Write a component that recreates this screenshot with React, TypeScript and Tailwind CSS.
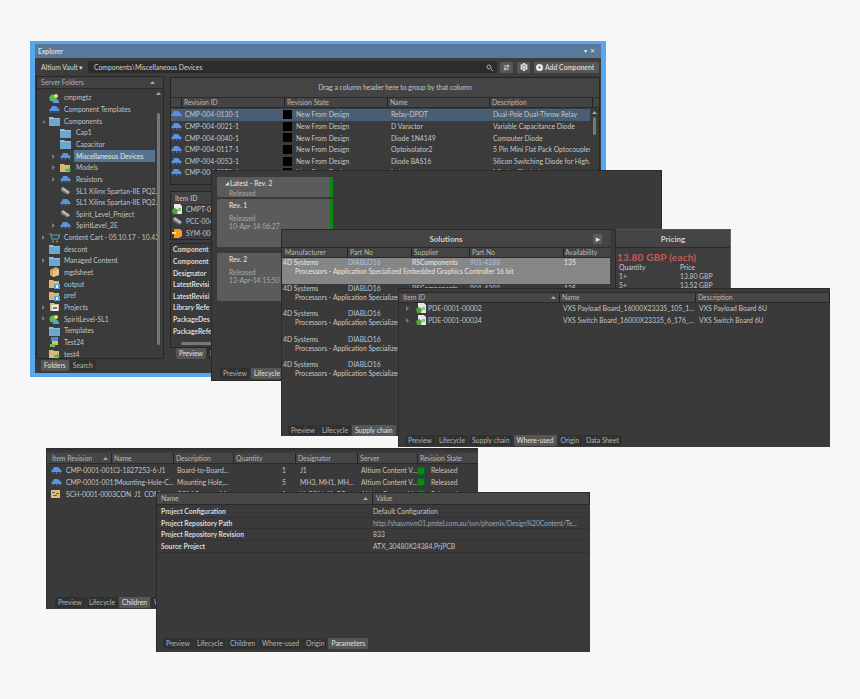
import type { ReactNode } from "react";
import { ArrowRightLeft, Settings } from "lucide-react";

type IconKind = "cloud" | "folder" | "tan" | "person" | "chip" | "cart" | "doc" | "sym" | "sch" | "cube" | "link" | "stack" | "green";

const Icon = ({ kind }: { kind: IconKind }) => {
  if (kind === "folder")
    return (
      <svg width="11" height="10" viewBox="0 0 11 10" className="shrink-0">
        <path d="M0 1h4l1 1h6v8H0z" fill="#8fc0df" />
        <path d="M0 3h11v7H0z" fill="#6ba7cf" />
      </svg>
    );
  if (kind === "tan")
    return (
      <svg width="11" height="10" viewBox="0 0 11 10" className="shrink-0">
        <path d="M0 1h4l1 1h5v7H0z" fill="#d8b873" />
        <path d="M5 5h6v5H5z" fill="#5aa0d8" />
        <path d="M7 6h2v3H7z" fill="#eee" />
      </svg>
    );
  if (kind === "green")
    return (
      <svg width="11" height="10" viewBox="0 0 11 10" className="shrink-0">
        <path d="M0 1h4l1 1h5v7H0z" fill="#d8b873" />
        <path d="M5 6h3V4l3 3-3 3V8H5z" fill="#4cb84c" />
      </svg>
    );
  if (kind === "cube")
    return (
      <svg width="11" height="10" viewBox="0 0 11 10" className="shrink-0">
        <path d="M1 3l6-3 3 2v6l-6 2-3-2z" fill="#c9a86b" />
        <path d="M4 4l6-2v6l-6 2z" fill="#e0c48c" />
      </svg>
    );
  if (kind === "person")
    return (
      <svg width="11" height="10" viewBox="0 0 11 10" className="shrink-0">
        <circle cx="4" cy="5" r="3.5" fill="#5cb85c" />
        <circle cx="7" cy="3" r="2" fill="#f0d860" />
        <path d="M4 10c0-3 1-4 3-4s3 1 3 4z" fill="#5aa0d8" />
      </svg>
    );
  if (kind === "chip")
    return (
      <svg width="11" height="10" viewBox="0 0 11 10" className="shrink-0">
        <path d="M1 3l2-2 7 5-2 2z" fill="#b5b5b5" />
        <path d="M1 3l7 5v1L1 5z" fill="#777" />
      </svg>
    );
  if (kind === "cart")
    return (
      <svg width="11" height="10" viewBox="0 0 11 10" className="shrink-0">
        <path d="M0 1h2l1 5h6l2-4H3" fill="none" stroke="#58a8a8" strokeWidth="1.2" />
        <circle cx="4" cy="8.5" r="1" fill="#c58a3a" />
        <circle cx="8" cy="8.5" r="1" fill="#c58a3a" />
      </svg>
    );
  if (kind === "doc")
    return (
      <svg width="11" height="11" viewBox="0 0 11 11" className="shrink-0">
        <path d="M2 0h6l2 2v8H2z" fill="#e8e8e8" />
        <path d="M0 6l3-2 3 2-1 4H1z" fill="#5aa03c" />
        <path d="M6 4h3v3H6z" fill="#8cc870" />
      </svg>
    );
  if (kind === "sym")
    return (
      <svg width="11" height="10" viewBox="0 0 11 10" className="shrink-0">
        <path d="M2 1h6l2 2v5l-3 2H2z" fill="#f0a020" />
        <path d="M0 4h4v2H0z" fill="#ffe080" />
      </svg>
    );
  if (kind === "sch")
    return (
      <svg width="9" height="8" viewBox="0 0 9 8" className="shrink-0">
        <path d="M0 0h9v8H0z" fill="#e0c070" />
        <path d="M1 2h3v1H1zM5 3h3v1H5zM2 5h4v1H2z" fill="#4a5f9a" />
      </svg>
    );
  if (kind === "link")
    return (
      <svg width="11" height="10" viewBox="0 0 11 10" className="shrink-0">
        <path d="M1 1h4l1 1h4v7H1z" fill="#d8c080" />
        <path d="M3 3h6v6H3z" fill="#e8eef8" />
        <path d="M4 5h4v2H4z" fill="#4c80c8" />
      </svg>
    );
  if (kind === "stack")
    return (
      <svg width="11" height="10" viewBox="0 0 11 10" className="shrink-0">
        <path d="M2 0h7v4H2z" fill="#4c88d8" />
        <path d="M3 4h6v4H3z" fill="#e0c050" />
        <path d="M1 7h5v3H1z" fill="#70b860" />
      </svg>
    );
  return (
    <svg width="11" height="9" viewBox="0 0 11 9" className="shrink-0">
      <path d="M0 5l2-2 1-2h4l2 2 2 2-1 1H1z" fill="#5b93dc" />
      <path d="M2 6v2M5.500 6v2M9 6v2" stroke="#3f6fb5" strokeWidth="1" />
    </svg>
  );
};

const Arrow = ({ open }: { open?: boolean }) => (
  <svg width="5" height="5" viewBox="0 0 5 5" className="shrink-0">
    <path d={open ? "M4 1v3H1z" : "M1 0l3 2.500-3 2.500z"} fill="#7c7c7c" />
  </svg>
);

const SortUp = () => (
  <svg width="5" height="3" viewBox="0 0 5 3" className="shrink-0">
    <path d="M0 3l2.500-3 2.500 3z" fill="#a8a8a8" />
  </svg>
);

const Tabs = ({ items, active, className }: { items: string[]; active: string; className: string }) => (
  <div className={`flex gap-[1px] ${className}`}>
    {items.map((t) => (
      <div
        key={t}
        className={`h-[11px] flex items-center px-[3px] rounded-b-[2px] ${
          t === active ? "bg-[#565656] text-[#e2e2e2]" : "bg-[#313131] text-[#b5b5b5]"
        }`}
      >
        {t}
      </div>
    ))}
  </div>
);

const Head = ({ children, className = "" }: { children: ReactNode; className?: string }) => (
  <div className={`flex items-center border-r border-[#222] pl-[2px] text-[#b9b9b9] overflow-hidden whitespace-nowrap ${className}`}>
    {children}
  </div>
);

const tree: { label: string; kind: IconKind; depth: number; arrow?: boolean; open?: boolean; sel?: boolean }[] = [
  { label: "cmpmgtz", kind: "person", depth: 1 },
  { label: "Component Templates", kind: "cloud", depth: 1 },
  { label: "Components", kind: "folder", depth: 1, arrow: true, open: true },
  { label: "Cap1", kind: "folder", depth: 2 },
  { label: "Capacitor", kind: "folder", depth: 2 },
  { label: "Miscellaneous Devices", kind: "cloud", depth: 2, arrow: true, sel: true },
  { label: "Models", kind: "green", depth: 2, arrow: true },
  { label: "Resistors", kind: "cloud", depth: 2, arrow: true },
  { label: "SL1 Xilinx Spartan-IIE PQ2...", kind: "chip", depth: 2 },
  { label: "SL1 Xilinx Spartan-IIE PQ2...", kind: "cloud", depth: 2 },
  { label: "Spirit_Level_Project", kind: "chip", depth: 2 },
  { label: "SpiritLevel_2E", kind: "cloud", depth: 2, arrow: true },
  { label: "Content Cart - 05.10.17 - 10.43", kind: "cart", depth: 1, arrow: true },
  { label: "descont", kind: "folder", depth: 1 },
  { label: "Managed Content", kind: "folder", depth: 1, arrow: true },
  { label: "mgdsheet", kind: "cube", depth: 1 },
  { label: "output", kind: "tan", depth: 1 },
  { label: "pref", kind: "tan", depth: 1 },
  { label: "Projects", kind: "link", depth: 1, arrow: true },
  { label: "SpiritLevel-SL1", kind: "person", depth: 1, arrow: true },
  { label: "Templates", kind: "folder", depth: 1 },
  { label: "Test24", kind: "stack", depth: 1 },
  { label: "test4", kind: "green", depth: 1 },
];

const revisions = [
  ["CMP-004-0130-1", "Relay-DPDT", "Dual-Pole Dual-Throw Relay"],
  ["CMP-004-0021-1", "D Varactor", "Variable Capacitance Diode"],
  ["CMP-004-0040-1", "Diode 1N4149", "Computer Diode"],
  ["CMP-004-0117-1", "Optoisolator2", "5 Pin Mini Flat Pack Optocoupler"],
  ["CMP-004-0053-1", "Diode BAS16", "Silicon Switching Diode for High..."],
  ["CMP-004-0071-1", "Inductor", "Missing Flat Inductor"],
];

const paramNames = ["Component", "Component", "Designator", "LatestRevisi", "LatestRevisi", "Library Refe", "PackageDes", "PackageRefe"];

const Explorer = () => (
  <div className="absolute left-[30px] top-[41px] w-[576px] h-[336px] bg-[#56a6f0] pt-[3px] px-[5px] pb-[4px]">
    <div className="flex flex-col h-full bg-[#3b3b3b]">
      <div className="h-[14px] bg-[#58799a] flex items-center justify-between pl-[3px] pr-[3px] text-[#e8e8e8] font-medium">
        <span>Explorer</span>
        <span className="text-[6px] tracking-[3px]">▾✕</span>
      </div>
      <div className="h-[18px] flex items-center pl-[6px] pr-[2px] bg-[#3d3d3d]">
        <span className="w-[47px] font-medium text-[#d0d0d0] whitespace-nowrap">Altium Vault ▾</span>
        <div className="w-[409px] h-[12px] bg-[#2c2c2c] rounded-[2px] flex items-center justify-between pl-[6px] pr-[4px] text-[#d4d4d4]">
          <span>Components\Miscellaneous Devices</span>
          <svg width="7" height="7" viewBox="0 0 7 7" fill="none" stroke="#aaa">
            <circle cx="3" cy="3" r="2" />
            <path d="M4.500 4.500L7 7" />
          </svg>
        </div>
        <div className="w-[13px] h-[11px] ml-[3px] bg-[#565656] rounded-[1px] flex items-center justify-center">
          <ArrowRightLeft size={7} color="#eee" strokeWidth={3} />
        </div>
        <div className="w-[13px] h-[11px] ml-[4px] bg-[#565656] rounded-[1px] flex items-center justify-center">
          <Settings size={8} color="#eee" strokeWidth={3.500} />
        </div>
        <div className="w-[65px] h-[11px] ml-[4px] bg-[#565656] rounded-[1px] flex items-center gap-[2px] pl-[2px] text-[#e4e4e4] font-medium whitespace-nowrap">
          <span className="w-[7px] h-[7px] rounded-full bg-[#eee] flex items-center justify-center text-[#444] text-[7px] leading-none shrink-0">+</span>
          Add Component
        </div>
      </div>
      <div className="flex flex-1 gap-[6px] pl-[1px] min-h-0">
        <div className="w-[128px] flex flex-col">
          <div className="h-[283px] border border-[#262626] flex flex-col">
            <div className="h-[12px] shrink-0 bg-[#424242] border-b border-[#2a2a2a] flex items-center justify-between pl-[4px] pr-[8px] text-[#b0b0b0]">
              <span>Server Folders</span>
              <SortUp />
            </div>
            <div className="flex flex-1 min-h-0">
              <div className="flex-1 pt-[3px] min-w-0">
                {tree.map((r, i) => (
                  <div key={i} className="h-[11.650px] flex items-center text-[#c2c2c2] whitespace-nowrap">
                    <span className={`flex items-center justify-end shrink-0 ${r.depth === 1 ? "w-[9px]" : "w-[19px]"}`}>
                      {r.arrow && <Arrow open={r.open} />}
                    </span>
                    <span className={`flex justify-center shrink-0 ${r.depth === 1 ? "w-[16px]" : "w-[18px]"}`}>
                      <Icon kind={r.kind} />
                    </span>
                    <span className={`h-full flex items-center px-[2px] ${r.sel ? "bg-[#56748f] text-[#e8e8e8] w-[84px]" : ""}`}>{r.label}</span>
                  </div>
                ))}
              </div>
              <div className="w-[8px] shrink-0 pt-[3px] pr-[2px] flex flex-col items-center">
                <SortUp />
                <div className="w-[3px] h-[232px] mt-[18px] bg-[#777] rounded-full" />
              </div>
            </div>
          </div>
          <Tabs items={["Folders", "Search"]} active="Folders" className="pl-[5px] pt-[1px]" />
        </div>

        <div className="w-[430px] flex flex-col pt-[1px] overflow-hidden">
          <div className="h-[108px] border border-[#262626] flex flex-col shrink-0">
            <div className="h-[19px] shrink-0 bg-[#444] flex items-center justify-center pl-[20px] text-[#c4c4c4]">
              Drag a column header here to group by that column
            </div>
            <div className="h-[11px] shrink-0 bg-[#444] border-y border-[#2a2a2a] grid grid-cols-[11px_103px_103px_102px_103px_1fr]">
              <Head> </Head>
              <Head>Revision ID</Head>
              <Head>Revision State</Head>
              <Head>Name</Head>
              <Head>Description</Head>
            </div>
            <div className="flex flex-1 min-h-0">
              <div className="flex-1 overflow-hidden pt-[1px]">
                {revisions.map((r, i) => (
                  <div
                    key={r[0]}
                    className={`h-[11.600px] grid grid-cols-[14px_98px_13px_95px_102px_1fr] items-center whitespace-nowrap text-[#c6c6c6] ${
                      i === 0 ? "bg-[#495e72]" : ""
                    }`}
                  >
                    <Icon kind="cloud" />
                    <span>{r[0]}</span>
                    <span className="w-[9px] h-[9px] bg-black" />
                    <span>New From Design</span>
                    <span>{r[1]}</span>
                    <span className="overflow-hidden">{r[2]}</span>
                  </div>
                ))}
              </div>
              <div className="w-[9px] shrink-0 pt-[3px] flex flex-col items-center">
                <SortUp />
                <div className="w-[3px] h-[18px] mt-[3px] bg-[#777] rounded-full" />
              </div>
            </div>
          </div>
          <div className="mt-[6px] h-[49px] border border-[#262626] flex flex-col shrink-0 pl-[1px]">
            <div className="h-[12px] flex items-center pl-[3px] font-medium text-[#bdbdbd] bg-[#424242]">Item ID</div>
            {[["doc", "CMPT-004-0130-1"], ["chip", "PCC-004-0130-1"], ["sym", "SYM-004-0130-1"]].map(([k, t]) => (
              <div key={t} className="h-[11.600px] flex items-center gap-[3px] text-[#c4c4c4]">
                <Icon kind={k as IconKind} />
                {t}
              </div>
            ))}
          </div>
          <div className="mt-[3px] h-[105px] border border-[#262626] flex flex-col shrink-0 pl-[2px]">
            {paramNames.map((n, i) => (
              <div key={i} className="h-[11.600px] flex items-center font-bold text-[#dcdcdc]">{n}</div>
            ))}
            <div className="mt-[5px] ml-[8px] w-[40px] h-[3px] bg-[#777] rounded-full" />
          </div>
          <Tabs items={["Preview", "Lifecycle"]} active="Preview" className="pl-[6px]" />
        </div>
      </div>
    </div>
  </div>
);

const Card = ({ title, h, lines, green, first }: { title: string; h: string; lines: string[]; green?: boolean; first?: boolean }) => (
  <div className={`w-[116px] bg-[#5b5b5b] rounded-[2px] flex ${h}`}>
    <div className="flex-1 pl-[12px] pt-[1px]">
      <div className="h-[11px] flex items-center font-medium text-[#e0e0e0]">
        {first && <span className="text-[5px] -ml-[4px] mr-[1px]">◢</span>}
        {title}
      </div>
      {!first && <div className="h-[3px]" />}
      {lines.map((l) => (
        <div key={l} className="h-[8px] flex items-center text-[#a8a8a8]">{l}</div>
      ))}
    </div>
    {green && <div className="w-[3px] bg-[#0b8a12]" />}
  </div>
);

const Lifecycle = () => (
  <div className="absolute left-[211px] top-[170px] w-[451px] h-[211px] bg-[#3a3a3a] border border-[#2a2a2a] flex flex-col pl-[5px] pt-[6px]">
    <div className="flex flex-col gap-[2px] flex-1">
      <Card title="Latest - Rev. 2" h="h-[20px]" lines={["Released"]} first green />
      <Card title="Rev. 1" h="h-[48px]" lines={["Released", "10-Apr-14 06:27"]} green />
      <div className="h-[2px]" />
      <Card title="Rev. 2" h="h-[48px]" lines={["Released", "13-Apr-14 15:50"]} />
    </div>
    <Tabs items={["Preview", "Lifecycle"]} active="Lifecycle" className="pl-[3px] pb-[1px]" />
  </div>
);

const supply = [0, 1, 2, 3, 4];

const Solutions = () => (
  <div className="absolute left-[281px] top-[229px] w-[450px] h-[207px] bg-[#3a3a3a] border-t border-l border-[#2a2a2a] flex">
    <div className="w-[328px] flex flex-col">
      <div className="h-[18px] shrink-0 flex items-center justify-center relative font-bold text-[8px] text-[#cfcfcf] bg-[#444] border-b border-[#2a2a2a]">
        Solutions
        <span className="absolute right-[8px] top-[4px] w-[9px] h-[10px] bg-[#5d5d5d] rounded-[1px] flex items-center justify-center text-[5px] text-[#eee]">▶</span>
      </div>
      <div className="h-[10px] shrink-0 grid grid-cols-[65px_64px_58px_94px_1fr] pl-[1px] bg-[#444] border-b border-[#2a2a2a]">
        <Head className="pl-[1px]">Manufacturer</Head>
        <Head className="pl-[1px]">Part No</Head>
        <Head className="pl-[1px]">Supplier</Head>
        <Head className="pl-[1px]">Part No</Head>
        <div className="pl-[1px] flex items-center text-[#b9b9b9] whitespace-nowrap">Availability</div>
      </div>
      <div className="flex-1">
        {supply.map((i) => (
          <div key={i} className={`h-[25.500px] pl-[1px] pr-[1px] ${i === 0 ? "bg-[#868686] text-[#e6e6e6]" : "text-[#c8c8c8]"}`}>
            <div className="h-[9px] grid grid-cols-[65px_64px_58px_94px_1fr] items-center whitespace-nowrap">
              <span>4D Systems</span>
              <span className={i === 0 ? "text-[#a9c0dc]" : "text-[#b4c4d6]"}>DIABLO16</span>
              <span>RSComponents</span>
              <span className={i === 0 ? "text-[#a9c0dc]" : "text-[#b4c4d6]"}>901-4288</span>
              <span>135</span>
            </div>
            <div className="pl-[12px] h-[9px] flex items-center whitespace-nowrap">Processors - Application Specialized Embedded Graphics Controller 16 bit</div>
          </div>
        ))}
      </div>
      <Tabs items={["Preview", "Lifecycle", "Supply chain"]} active="Supply chain" className="pl-[6px]" />
    </div>
    <div className="w-[5px]" />
    <div className="flex-1 bg-[#3d3d3d] -mt-[1px] border border-b-0 border-l-[#2a2a2a] border-t-[#555] border-r-[#666]">
      <div className="h-[18px] flex items-center justify-center font-bold text-[8px] text-[#cfcfcf] bg-[#444] border-b border-[#2a2a2a]">Pricing</div>
      <div className="pl-[1px] pt-[2px]">
        <div className="font-bold text-[10px] tracking-[0.2px] text-[#c75a5a] h-[14px] flex items-center">13.80 GBP (each)</div>
        <div className="grid grid-cols-[61px_1fr] pl-[2px] gap-y-[2px] text-[#c4c4c4]">
          <span className="font-medium">Quantity</span>
          <span className="font-medium">Price</span>
          <span>1+</span>
          <span>13.80 GBP</span>
          <span>5+</span>
          <span>13.52 GBP</span>
        </div>
      </div>
    </div>
  </div>
);

const WhereUsed = () => (
  <div className="absolute left-[398px] top-[288px] w-[432px] h-[159px] bg-[#3a3a3a] border-t border-l border-[#2a2a2a] flex flex-col">
    <div className="h-[3px]" />
    <div className="h-[11px] shrink-0 grid grid-cols-[161px_136px_1fr] bg-[#464646] border-y border-[#2a2a2a]">
      <Head className="justify-between pr-[3px] pl-[4px]">
        Item ID
        <SortUp />
      </Head>
      <Head>Name</Head>
      <Head>Description</Head>
    </div>
    <div className="flex-1">
      {[
        ["PDE-0001-00002", "VXS Payload Board_16000X23335_105_1...", "VXS Payload Board 6U"],
        ["PDE-0001-00034", "VXS Switch Board_16000X23335_6_176_...", "VXS Switch Board 6U"],
      ].map((r) => (
        <div key={r[0]} className="h-[11.600px] grid grid-cols-[11px_12px_135px_136px_1fr] items-center pl-[6px] whitespace-nowrap text-[#c4c4c4]">
          <Arrow />
          <Icon kind="doc" />
          <span>{r[0]}</span>
          <span>{r[1]}</span>
          <span>{r[2]}</span>
        </div>
      ))}
    </div>
    <Tabs items={["Preview", "Lifecycle", "Supply chain", "Where-used", "Origin", "Data Sheet"]} active="Where-used" className="pl-[6px] pb-[1px]" />
  </div>
);

const children = [
  ["cloud", "CMP-0001-0010", "3-1827253-6-J1", "Board-to-Board...", "1", "J1"],
  ["cloud", "CMP-0001-0011", "Mounting-Hole-C...", "Mounting Hole,...", "5", "MH3, MH1, MH..."],
  ["sch", "SCH-0001-0003", "CON_J1_COM", "COM Express M...", "1", "U_CON_J1_CO..."],
];

const Children = () => (
  <div className="absolute left-[46px] top-[448px] w-[432px] h-[161px] bg-[#3a3a3a] border-t-2 border-l border-[#2f2f2f] flex flex-col">
    <div className="h-[3px]" />
    <div className="h-[11px] shrink-0 grid grid-cols-[65px_62px_60px_62px_62px_60px_1fr] bg-[#464646] border-b border-[#2a2a2a]">
      <Head className="justify-between pr-[3px] pl-[5px]">
        Item Revision
        <SortUp />
      </Head>
      <Head>Name</Head>
      <Head>Description</Head>
      <Head>Quantity</Head>
      <Head>Designator</Head>
      <Head>Server</Head>
      <div className="pl-[2px] flex items-center text-[#b9b9b9]">Revision State</div>
    </div>
    <div className="flex-1 pt-[1px] overflow-hidden">
      {children.map((r) => (
        <div key={r[1]} className="h-[11.600px] grid grid-cols-[15px_50px_61px_62px_61px_61px_56px_1fr] items-center whitespace-nowrap text-[#c4c4c4] pl-[4px]">
          <Icon kind={r[0] as IconKind} />
          <span className="overflow-hidden pr-[5px]">{r[1]}</span>
          <span className="overflow-hidden pr-[2px]">{r[2]}</span>
          <span className="overflow-hidden pr-[2px]">{r[3]}</span>
          <span className="text-right pr-[14px]">{r[4]}</span>
          <span className="overflow-hidden pr-[2px]">{r[5]}</span>
          <span className="overflow-hidden pr-[2px]">Altium Content V...</span>
          <span className="flex items-center gap-[6px]">
            <span className="w-[8px] h-[8px] bg-[#0b8a12] border border-[#063] shrink-0" />
            Released
          </span>
        </div>
      ))}
    </div>
    <Tabs items={["Preview", "Lifecycle", "Children", "Where-used"]} active="Children" className="pl-[8px] pb-[1px]" />
  </div>
);

const params = [
  ["Project Configuration", "Default Configuration"],
  ["Project Repository Path", "http://shasvnvm01.protel.com.au/svn/phoenix/Design%20Content/Te..."],
  ["Project Repository Revision", "833"],
  ["Source Project", "ATX_30480X24384.PrjPCB"],
];

const Parameters = () => (
  <div className="absolute left-[156px] top-[492px] w-[434px] h-[160px] bg-[#3a3a3a] border-t border-l border-[#2a2a2a] flex flex-col">
    <div className="h-[12px] shrink-0 grid grid-cols-[216px_1fr] bg-[#474747] border-b border-[#2a2a2a]">
      <Head className="justify-between pl-[4px] pr-[4px] font-medium">
        Name
        <SortUp />
      </Head>
      <Head className="pl-[3px]">Value</Head>
    </div>
    <div className="flex-1 pt-[1px]">
      {params.map((r, i) => (
        <div key={r[0]} className="h-[11.700px] grid grid-cols-[216px_1fr] items-center whitespace-nowrap border-b border-[#333]">
          <span className="pl-[4px] font-bold text-[#dadada]">{r[0]}</span>
          <span className={i === 1 ? "text-[#8fa6c4] tracking-[-0.15px]" : "text-[#c4c4c4]"}>{r[1]}</span>
        </div>
      ))}
    </div>
    <Tabs items={["Preview", "Lifecycle", "Children", "Where-used", "Origin", "Parameters"]} active="Parameters" className="pl-[6px] pb-[3px]" />
  </div>
);

export default function App() {
  return (
    <div className="relative w-[860px] h-[699px] bg-[#f7f7f7] overflow-hidden font-['Lato',sans-serif] text-[6.800px] leading-none">
      <Explorer />
      <Lifecycle />
      <Solutions />
      <WhereUsed />
      <Children />
      <Parameters />
    </div>
  );
}
